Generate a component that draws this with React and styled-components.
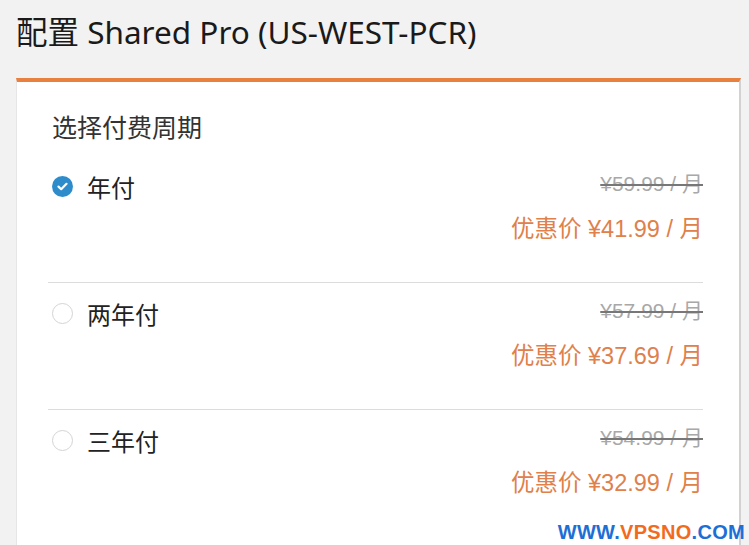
import styled, { createGlobalStyle } from 'styled-components';

const Global = createGlobalStyle`
  html, body {
    margin: 0;
    padding: 0;
    background: #f2f2f2;
    font-family: "Noto Sans", "Noto Sans CJK SC", sans-serif;
    color: #222;
  }
`

const plans = [
  { id: 1, label: '年付', original: '¥59.99 / 月', price: '¥41.99 / 月', checked: true },
  { id: 2, label: '两年付', original: '¥57.99 / 月', price: '¥37.69 / 月' },
  { id: 3, label: '三年付', original: '¥54.99 / 月', price: '¥32.99 / 月' },
]

export default function App() {
  return (
    <Page>
      <Global />
      <Title>配置 Shared Pro (US-WEST-PCR)</Title>
      <Card>
        <Heading>选择付费周期</Heading>
        {plans.map((p, i) => (
          <Row key={p.id} last={i === plans.length - 1}>
            <Choice>
              <Radio checked={p.checked}>
                {p.checked ? (
                  <svg width="11" height="9" viewBox="0 0 11 9">
                    <path d="M1.5 4.6 L4.2 7.2 L9.5 1.8" fill="none" stroke="#fff" strokeWidth="2.2" strokeLinecap="round" strokeLinejoin="round" />
                  </svg>
                ) : null}
              </Radio>
              <Label>{p.label}</Label>
            </Choice>
            <Prices>
              <Original>{p.original}</Original>
              <Discount>优惠价 {p.price}</Discount>
            </Prices>
          </Row>
        ))}
      </Card>
      <Watermark>
        WWW.<span>VPSNO</span>.COM
      </Watermark>
    </Page>
  )
}

const Page = styled.div`
  position: relative;
  height: 545px;
  overflow: hidden;
  padding: 12px 8px 0 16px;
  box-sizing: border-box;
`
const Title = styled.h1`
  margin: 0 0 26px 0;
  font-size: 31.5px;
  font-weight: 400;
  line-height: 40px;
  color: #1a1a1a;
`
const Card = styled.div`
  background: #fff;
  border-top: 4px solid #e8803f;
  border-left: 1px solid #e6e6e6;
  border-right: 2px solid #d2d2d2;
  padding: 30px 36px 40px 31px;
  min-height: 500px;
`
const Heading = styled.div`
  font-size: 25px;
  line-height: 30px;
  color: #333;
  padding-left: 4px;
  margin-bottom: 14px;
`
const Row = styled.div`
  display: flex;
  justify-content: space-between;
  align-items: flex-start;
  padding: 15px 0 38px 4px;
  border-bottom: ${p => (p.last ? 'none' : '1px solid #dcdcdc')};
`
const Choice = styled.div`
  display: flex;
  align-items: center;
  gap: 14px;
  height: 30px;
`
const Radio = styled.span`
  width: 21px;
  height: 21px;
  box-sizing: border-box;
  border-radius: 50%;
  display: flex;
  align-items: center;
  justify-content: center;
  background: ${p => (p.checked ? '#2f8ccb' : '#fff')};
  border: ${p => (p.checked ? 'none' : '1px solid #d4d4d4')};
`
const Label = styled.span`
  font-size: 24px;
  color: #222;
`
const Prices = styled.div`
  display: flex;
  flex-direction: column;
  align-items: flex-end;
`
const Original = styled.span`
  font-family: "Liberation Sans", "Noto Sans CJK SC", sans-serif;
  font-size: 21px;
  line-height: 30px;
  color: #a8a8a8;
  text-decoration: line-through;
  text-decoration-color: #777;
  text-decoration-thickness: 2px;
  margin-top: -2px;
`
const Discount = styled.span`
  font-family: "Liberation Sans", "Noto Sans CJK SC", sans-serif;
  font-size: 23.5px;
  line-height: 30px;
  margin-top: 15px;
  color: #e0804a;
`
const Watermark = styled.div`
  position: absolute;
  right: 4px;
  bottom: 1px;
  font-family: "Liberation Sans", Arial, sans-serif;
  font-weight: 700;
  font-size: 20px;
  letter-spacing: 0.3px;
  color: #1d6fd6;
  span {
    color: #f26b1d;
  }
`
